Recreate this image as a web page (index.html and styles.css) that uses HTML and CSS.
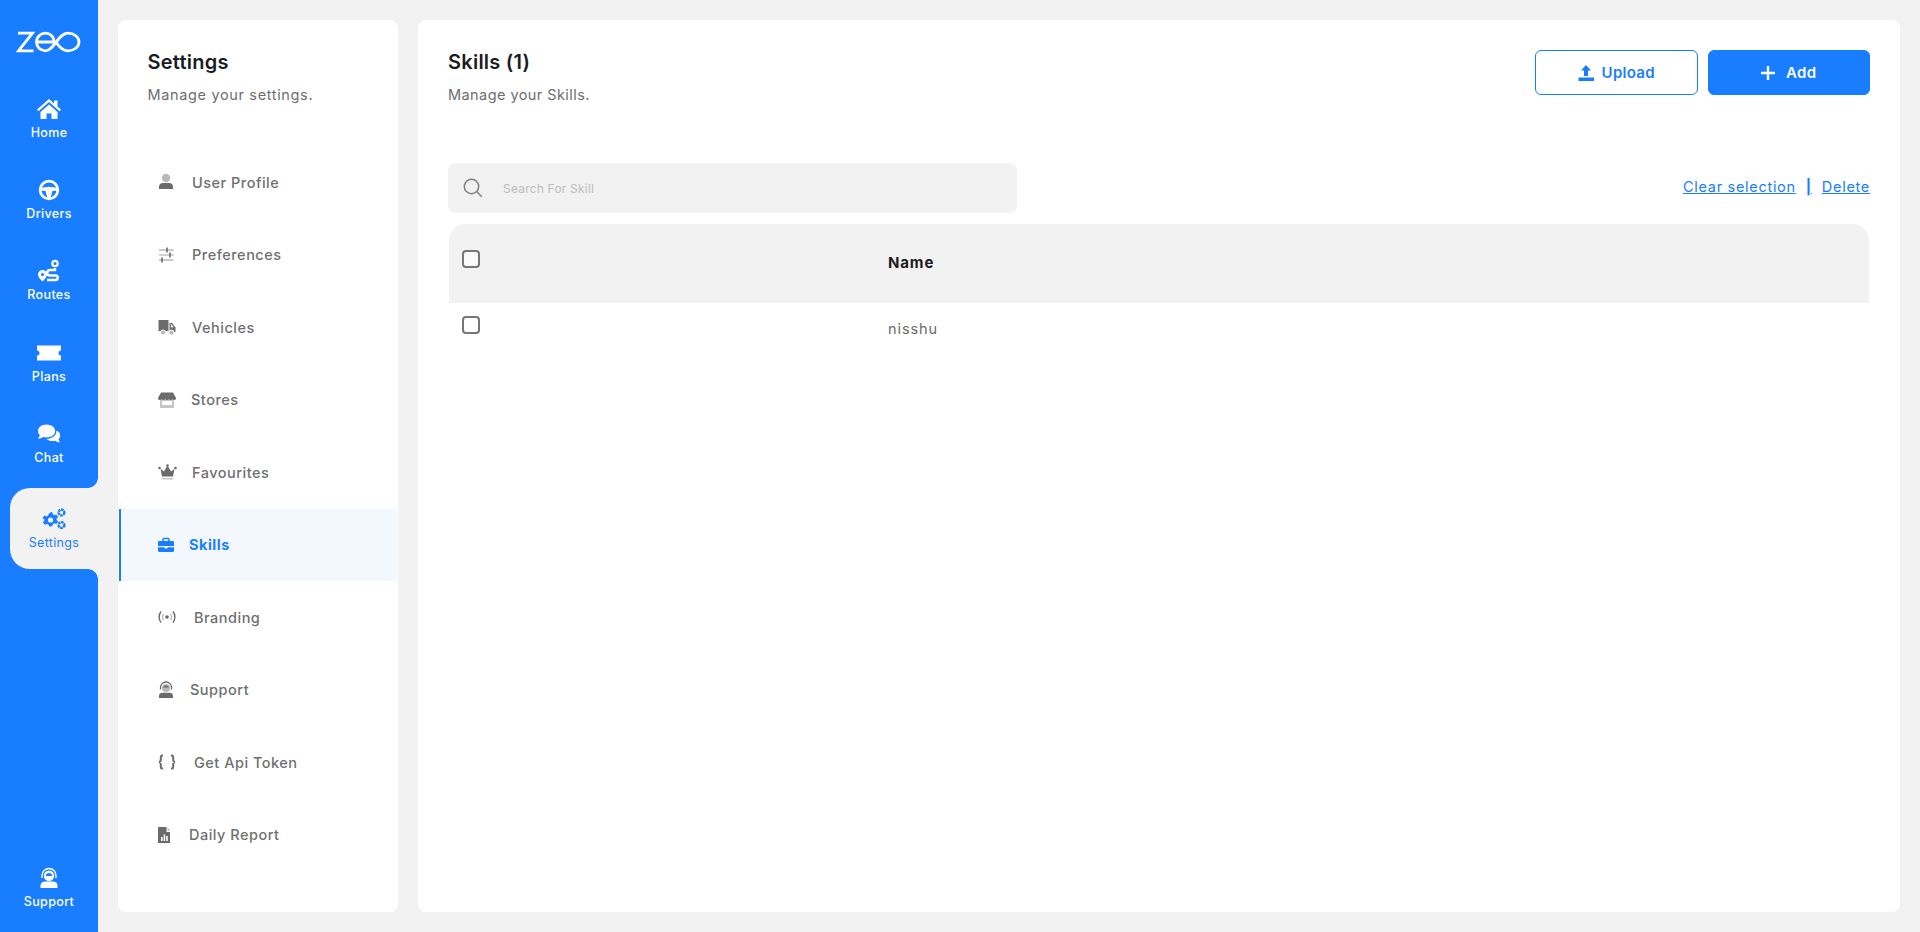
FILE: index.html
```html
<!DOCTYPE html>
<html lang="en">
<head>
<meta charset="utf-8">
<title>Skills - Settings</title>
<link rel="stylesheet" href="styles.css">
</head>
<body>
<div class="app">
  <aside class="rail">
    <div class="logo">
      <svg width="66" height="26" viewBox="0 0 66 26" fill="none" stroke="#fff" stroke-width="2.800">
        <path d="M2 4.200H16.500L2.500 21.800H17.500"/>
        <path d="M20.500 13H38C38 7.500 34 4.200 29.500 4.200C24.500 4.200 20.500 8 20.500 13C20.500 18 24.500 21.800 29.500 21.800C38 21.800 42 4.200 52 4.200C58 4.200 63 8 63 13C63 18 58 21.800 52 21.800C46 21.800 42.500 17 40 13"/>
      </svg>
    </div>
    <nav class="rail-nav">
      <a class="rail-item">
        <svg width="26" height="24" viewBox="0 0 26 24" fill="#fff"><path d="M13 2 1 12.500l1.500 1.700L13 5l10.500 9.200 1.500-1.700-3.500-3V3.500h-3.500v3z"/><path d="M13 7.500 4.500 15V22h6v-5.500h5V22h6v-7z"/></svg>
        <span>Home</span>
      </a>
      <a class="rail-item">
        <svg width="24" height="24" viewBox="0 0 24 24"><circle cx="12" cy="12" r="8.800" fill="none" stroke="#fff" stroke-width="2.800"/><path d="M3 10.500c3-1 6-1.700 9-1.700s6 .7 9 1.700v2l-5.500.5-2 7.500h-3l-2-7.500-5.500-.5z" fill="#fff"/></svg>
        <span>Drivers</span>
      </a>
      <a class="rail-item">
        <svg width="24" height="24" viewBox="0 0 24 24" fill="none"><circle cx="18" cy="4.500" r="2.700" stroke="#fff" stroke-width="2.200"/><path d="M18 9v2h-5a2.700 2.700 0 0 0 0 5.500h5.500a2.200 2.200 0 0 1 0 4.500H10" stroke="#fff" stroke-width="2.400"/><path d="M5.500 11a4.500 4.500 0 0 1 4.500 4.500c0 2.500-3 5.500-4.500 7-1.500-1.500-4.500-4.500-4.500-7A4.500 4.500 0 0 1 5.500 11z" fill="#fff"/><circle cx="5.500" cy="15.500" r="1.500" fill="#187dff"/></svg>
        <span>Routes</span>
      </a>
      <a class="rail-item">
        <svg width="24" height="24" viewBox="0 0 24 24" fill="#fff"><path d="M0 4.500h24v5a2.500 2.500 0 0 0 0 5v5H0v-5a2.500 2.500 0 0 0 0-5z"/></svg>
        <span>Plans</span>
      </a>
      <a class="rail-item">
        <svg width="24" height="24" viewBox="0 0 24 24" fill="#fff"><path d="M9.500 2.500c5 0 8.700 2.900 8.700 6.500s-3.700 6.500-8.700 6.500c-1.200 0-2.300-.2-3.300-.5C4.800 16 3 16.500.8 16.500c1-.8 1.800-2 2-3.200C1.600 12.100 1 10.600 1 9c0-3.600 3.500-6.500 8.500-6.500z"/><path d="M19.500 8.500c2.300 1 3.700 2.800 3.700 5 0 1.500-.6 2.800-1.700 3.800.2 1.100.9 2.300 1.800 3-2 0-3.600-.5-4.900-1.600-.9.300-1.900.4-2.900.4-2.500 0-4.500-.8-5.900-2.200 5.500 0 10-3.300 9.900-8.400z"/></svg>
        <span>Chat</span>
      </a>
      <a class="rail-item active">
        <svg width="26" height="24" viewBox="0 0 26 24" fill="#187dff"><path d="M10 5l1.300.3.500 2 1.500.9 2-.6 1.800 2.400-1.500 1.400v1.700l1.500 1.400-1.800 2.400-2-.6-1.500.9-.5 2-3 .4-.8-1.900-1.600-.7-2 .8-2-2.300 1.300-1.700v-1.600L1.400 10.900l2-2.300 2 .8 1.600-.7.800-1.900z"/><circle cx="9.500" cy="13" r="2.600" fill="#f2f2f2"/><circle cx="20.500" cy="5.500" r="2.900" fill="none" stroke="#187dff" stroke-width="2.400" stroke-dasharray="2.600 .6"/><circle cx="20.500" cy="18" r="2.900" fill="none" stroke="#187dff" stroke-width="2.400" stroke-dasharray="2.600 .6"/></svg>
        <span>Settings</span>
      </a>
      <a class="rail-item rail-bottom">
        <svg width="24" height="24" viewBox="0 0 24 24" fill="none"><path d="M5 12V9.500a7 7 0 0 1 14 0V12" stroke="#fff" stroke-width="1.400"/><circle cx="12" cy="9.800" r="5.200" fill="#fff"/><path d="M8.500 10c.3-2 1.800-3 3.500-3s3.200 1 3.500 3z" fill="#187dff"/><path d="M3.500 22v-2.500c0-2.500 2-4 4.500-4h8c2.500 0 4.500 1.500 4.500 4V22z" fill="#fff"/></svg>
        <span>Support</span>
      </a>
    </nav>
  </aside>

  <section class="panel settings">
    <header class="settings-head">
      <h2>Settings</h2>
      <p>Manage your settings.</p>
    </header>
    <ul class="menu">
      <li class="menu-item">
        <svg width="19" height="18" viewBox="0 0 19 18"><circle cx="8" cy="5" r="4.200" fill="#b9b9b9"/><path d="M1 16v-2.500C1 11 3 10 5 10h6c2 0 4 1 4 3.500V16z" fill="#6b6b6b"/></svg>
        <span>User Profile</span>
      </li>
      <li class="menu-item">
        <svg width="19" height="18" viewBox="0 0 19 18"><path d="M1 4h14.500M1 14h14.500" stroke="#b9b9b9" stroke-width="1.300"/><path d="M1 9h14.500" stroke="#b9b9b9" stroke-width="1.300"/><path d="M9 1.500v5M12 6.500v5M4 11.500v5" stroke="#6b6b6b" stroke-width="1.600"/></svg>
        <span>Preferences</span>
      </li>
      <li class="menu-item">
        <svg width="19" height="18" viewBox="0 0 19 18"><path d="M.5 2h10v11H.5z" fill="#6b6b6b"/><path d="M11.500 5h2.500l3.500 4.500V14h-6z" fill="#6b6b6b"/><path d="M12.800 6.500h.8l2 2.800h-2.800z" fill="#fff"/><circle cx="5" cy="14.500" r="2.500" fill="#b9b9b9" stroke="#fff"/><circle cx="13.500" cy="14.500" r="2.500" fill="#b9b9b9" stroke="#fff"/></svg>
        <span>Vehicles</span>
      </li>
      <li class="menu-item">
        <svg width="18" height="18" viewBox="0 0 18 18"><path d="M2 8h14v9H2z" fill="#c6c6c6"/><path d="M4 10h10v4H4z" fill="#fff"/><path d="M3 1.500h12l3 5.500c0 1.500-1 2-1.800 2s-1.500-.5-1.800-1c-.3.500-1 1-1.700 1s-1.400-.5-1.700-1c-.3.500-1 1-1.800 1S7.500 8.500 7.200 8c-.3.500-1 1-1.700 1s-1.400-.5-1.700-1C3.500 8.500 2.700 9 1.800 9S0 8.500 0 7z" fill="#6b6b6b"/></svg>
        <span>Stores</span>
      </li>
      <li class="menu-item">
        <svg width="19" height="18" viewBox="0 0 19 18"><path d="M9.500 2.500 13 8.500l3.500-2.800L15 13.500H4L2.500 5.700 6 8.500z" fill="#6b6b6b"/><circle cx="9.500" cy="2.500" r="1.300" fill="#6b6b6b"/><circle cx="1.500" cy="5" r="1.300" fill="#6b6b6b"/><circle cx="17.500" cy="5" r="1.300" fill="#6b6b6b"/><path d="M4 15h11v1.500H4z" fill="#c6c6c6"/></svg>
        <span>Favourites</span>
      </li>
      <li class="menu-item active">
        <svg width="16" height="18" viewBox="0 0 16 18"><path d="M5 5V3.500C5 2.800 5.500 2.400 6 2.400h4c.5 0 1 .4 1 1.100V5" fill="none" stroke="#187dff" stroke-width="1.500"/><path d="M0 6.200C0 5.500.5 5 1.200 5h13.600c.7 0 1.200.5 1.200 1.200V10H0zM0 11.200h6.500v1.300h3v-1.300H16v3.600c0 .7-.5 1.200-1.200 1.200H1.200C.5 16 0 15.500 0 14.800z" fill="#187dff"/></svg>
        <span>Skills</span>
      </li>
      <li class="menu-item">
        <svg width="21" height="18" viewBox="0 0 21 18" fill="none"><circle cx="9" cy="9" r="1.800" fill="#6b6b6b"/><path d="M3 3.500C.5 6.500.5 11.500 3 14.500M15 3.500c2.500 3 2.500 8 0 11" stroke="#6b6b6b" stroke-width="1.400"/><path d="M5.500 6c-1.300 1.800-1.300 4.200 0 6M12.500 6c1.300 1.800 1.300 4.200 0 6" stroke="#b9b9b9" stroke-width="1.300"/></svg>
        <span>Branding</span>
      </li>
      <li class="menu-item">
        <svg width="17" height="18" viewBox="0 0 17 18" fill="none"><path d="M2.500 8.500V6.500a5.500 5.500 0 0 1 11 0v2" stroke="#6b6b6b" stroke-width="1.300"/><circle cx="8" cy="7" r="4" fill="#b9b9b9"/><path d="M5 6.500c.5-1.500 1.700-2 3-2s2.500.5 3 2z" fill="#6b6b6b"/><path d="M1 17v-2c0-2 1.500-3.200 3.500-3.200h7c2 0 3.500 1.200 3.500 3.200v2z" fill="#6b6b6b"/></svg>
        <span>Support</span>
      </li>
      <li class="menu-item">
        <svg width="21" height="18" viewBox="0 0 21 18" fill="none" stroke="#6b6b6b" stroke-width="2"><path d="M5 2.500H4C3 2.500 2.800 3 2.800 4v3c0 1-.5 1.700-1.700 2 1.200.3 1.700 1 1.700 2v3c0 1 .2 1.500 1.200 1.500h1M13 2.500h1c1 0 1.200.5 1.200 1.500v3c0 1 .5 1.700 1.700 2-1.200.3-1.700 1-1.700 2v3c0 1-.2 1.500-1.200 1.500h-1"/></svg>
        <span>Get Api Token</span>
      </li>
      <li class="menu-item">
        <svg width="16" height="18" viewBox="0 0 16 18"><path d="M0 1h8.500v5H12v11H0z" fill="#6b6b6b"/><path d="M9.500 1 12 4.800H9.500z" fill="#b9b9b9"/><path d="M3 11h1.600v4H3zM5.600 8.500h1.600V15H5.600zM8.200 10h1.600v5H8.200z" fill="#fff"/></svg>
        <span>Daily Report</span>
      </li>
    </ul>
  </section>

  <main class="panel content">
    <header class="content-head">
      <div>
        <h1>Skills (1)</h1>
        <p>Manage your Skills.</p>
      </div>
      <div class="actions">
        <button class="btn btn-outline" type="button">
          <svg width="16" height="16" viewBox="0 0 16 16" fill="#187dff"><path d="M8 0 13 5.500H10V11H6V5.500H3z"/><path d="M.5 12.500H16V16H.5z"/></svg>
          Upload
        </button>
        <button class="btn btn-solid" type="button">
          <svg width="14" height="14" viewBox="0 0 14 14" fill="#fff"><path d="M5.800 0h2.400v5.800H14v2.400H8.200V14H5.800V8.200H0V5.800h5.800z"/></svg>
          Add
        </button>
      </div>
    </header>
    <div class="toolbar">
      <label class="search">
        <svg width="20" height="20" viewBox="0 0 20 20" fill="none" stroke="#808080" stroke-width="1.500"><circle cx="8.500" cy="8.500" r="7.200"/><path d="m13.800 13.800 5 5"/></svg>
        <input type="text" placeholder="Search For Skill">
      </label>
      <div class="bulk">
        <a>Clear selection</a>
        <a class="sep">|</a>
        <a>Delete</a>
      </div>
    </div>
    <div class="table">
      <div class="row row-head">
        <div class="cell-check"><span class="check"></span></div>
        <div class="cell-name">Name</div>
      </div>
      <div class="row row-body">
        <div class="cell-check"><span class="check"></span></div>
        <div class="cell-name">nisshu</div>
      </div>
    </div>
  </main>
</div>
</body>
</html>
```

FILE: styles.css
```css
* { box-sizing: border-box; }
html, body { margin: 0; height: 100%; }
body {
  background: #f2f2f2;
  font-family: Inter, "Open Sans", "Liberation Sans", sans-serif;
  color: #1c1c1e;
  overflow: hidden;
}
h1, h2, p, ul { margin: 0; padding: 0; }
ul { list-style: none; }
svg { display: block; flex: none; }

.app { display: flex; height: 932px; }

.rail {
  width: 98px;
  flex: none;
  background: #187dff;
  display: flex;
  flex-direction: column;
}
.logo { height: 78px; padding: 29px 0 0 16px; }
.rail-nav { flex: 1; display: flex; flex-direction: column; }
.rail-item {
  height: 81.3px;
  padding-top: 1px;
  display: flex;
  flex-direction: column;
  align-items: center;
  justify-content: center;
  gap: 3px;
  color: #fff;
  font-size: 12.5px;
  font-weight: 450;
  letter-spacing: .35px;
  line-height: 18px;
}
.rail-item.active {
  position: relative;
  margin: 4px 0 0 10px;
  height: 81px;
  background: #f2f2f2;
  border-radius: 20px 0 0 20px;
  color: #187dff;
  font-weight: 400;
}
.rail-item.active::before,
.rail-item.active::after {
  content: "";
  position: absolute;
  right: 0;
  width: 10px;
  height: 10px;
}
.rail-item.active::before {
  top: -10px;
  background: radial-gradient(circle at 0 0, #187dff 9.500px, #f2f2f2 10px);
}
.rail-item.active::after {
  bottom: -10px;
  background: radial-gradient(circle at 0 100%, #187dff 9.500px, #f2f2f2 10px);
}
.rail-bottom { margin-top: auto; margin-bottom: 3px; }

.panel { background: #fff; border-radius: 8px; margin-top: 20px; height: 892px; }

.settings { width: 280px; flex: none; margin-left: 20px; }
.settings-head { height: 126px; padding: 29px 29.500px 0; }
.settings-head h2 { font-size: 20px; font-weight: 600; line-height: 26px; letter-spacing: .25px; color: #1c1c1e; }
.settings-head p, .content-head p {
  font-size: 14.500px;
  line-height: 20px;
  margin-top: 10px;
  color: #6e6e6e;
}
.settings-head p { letter-spacing: .65px; }
.content-head p { letter-spacing: .43px; }
.menu-item {
  height: 72.500px;
  display: flex;
  align-items: center;
  gap: 15px;
  padding-left: 40px;
  font-size: 14.500px;
  font-weight: 500;
  letter-spacing: .5px;
  color: #6f6f6f;
}
.menu-item.active {
  margin: 0 1px;
  padding-left: 37px;
  background: #f3f8ff;
  border-left: 2px solid #187dff;
  color: #187dff;
  font-weight: 700;
}

.content { flex: 1; margin-left: 20px; margin-right: 20px; padding: 0 30px; }
.content-head { height: 143px; padding-top: 29px; display: flex; justify-content: space-between; align-items: flex-start; }
.content-head h1 { font-size: 20px; font-weight: 600; line-height: 26px; letter-spacing: .25px; }
.actions { display: flex; gap: 10px; margin-top: 1px; }
.btn {
  width: 162.500px;
  height: 45px;
  display: flex;
  align-items: center;
  justify-content: center;
  gap: 8px;
  border-radius: 6px;
  font: 600 15px Inter, "Open Sans", sans-serif;
  letter-spacing: .3px;
  padding: 0;
}
.btn-outline { background: #fff; border: 1px solid #187dff; color: #187dff; }
.btn-solid { background: #187dff; border: 1px solid #187dff; color: #fff; gap: 11px; }

.toolbar { display: flex; justify-content: space-between; align-items: center; height: 50px; }
.search {
  width: 569px;
  height: 50px;
  display: flex;
  align-items: center;
  gap: 20px;
  padding-left: 15px;
  background: #f2f2f2;
  border-radius: 8px;
}
.search input {
  flex: 1;
  border: 0;
  outline: 0;
  background: transparent;
  font: 12px Inter, "Open Sans", sans-serif;
  letter-spacing: .2px;
  padding: 0;
}
.search input::placeholder { color: #bdbdbd; opacity: 1; }
.bulk { display: flex; gap: 10px; margin-top: -3px; font-size: 14.500px; letter-spacing: .7px; color: #187dff; }
.bulk a { text-decoration: underline; }
.bulk .sep { font-weight: 700; color: #187dff; }

.table { margin-top: 11px; margin-left: 1px; width: 1420px; }
.row { display: flex; }
.row-head { height: 79px; background: #f2f2f2; border-radius: 16px 16px 0 0; align-items: flex-start; padding-top: 26px; }
.row-body { padding-top: 13px; }
.cell-check { width: 439px; padding-left: 13px; flex: none; }
.check { display: block; width: 18px; height: 18px; border: 2px solid #767676; border-radius: 4px; background: #fff; }
.row-head .check { background: #f9f9f9; }
.cell-name { line-height: 20px; font-size: 14.500px; }
.row-head .cell-name { margin-top: 3px; font-size: 15px; font-weight: 700; letter-spacing: .85px; color: #1c1c1e; }
.row-body .cell-name { margin-top: 2.500px; letter-spacing: .9px; color: #6b6b6b; }
```
